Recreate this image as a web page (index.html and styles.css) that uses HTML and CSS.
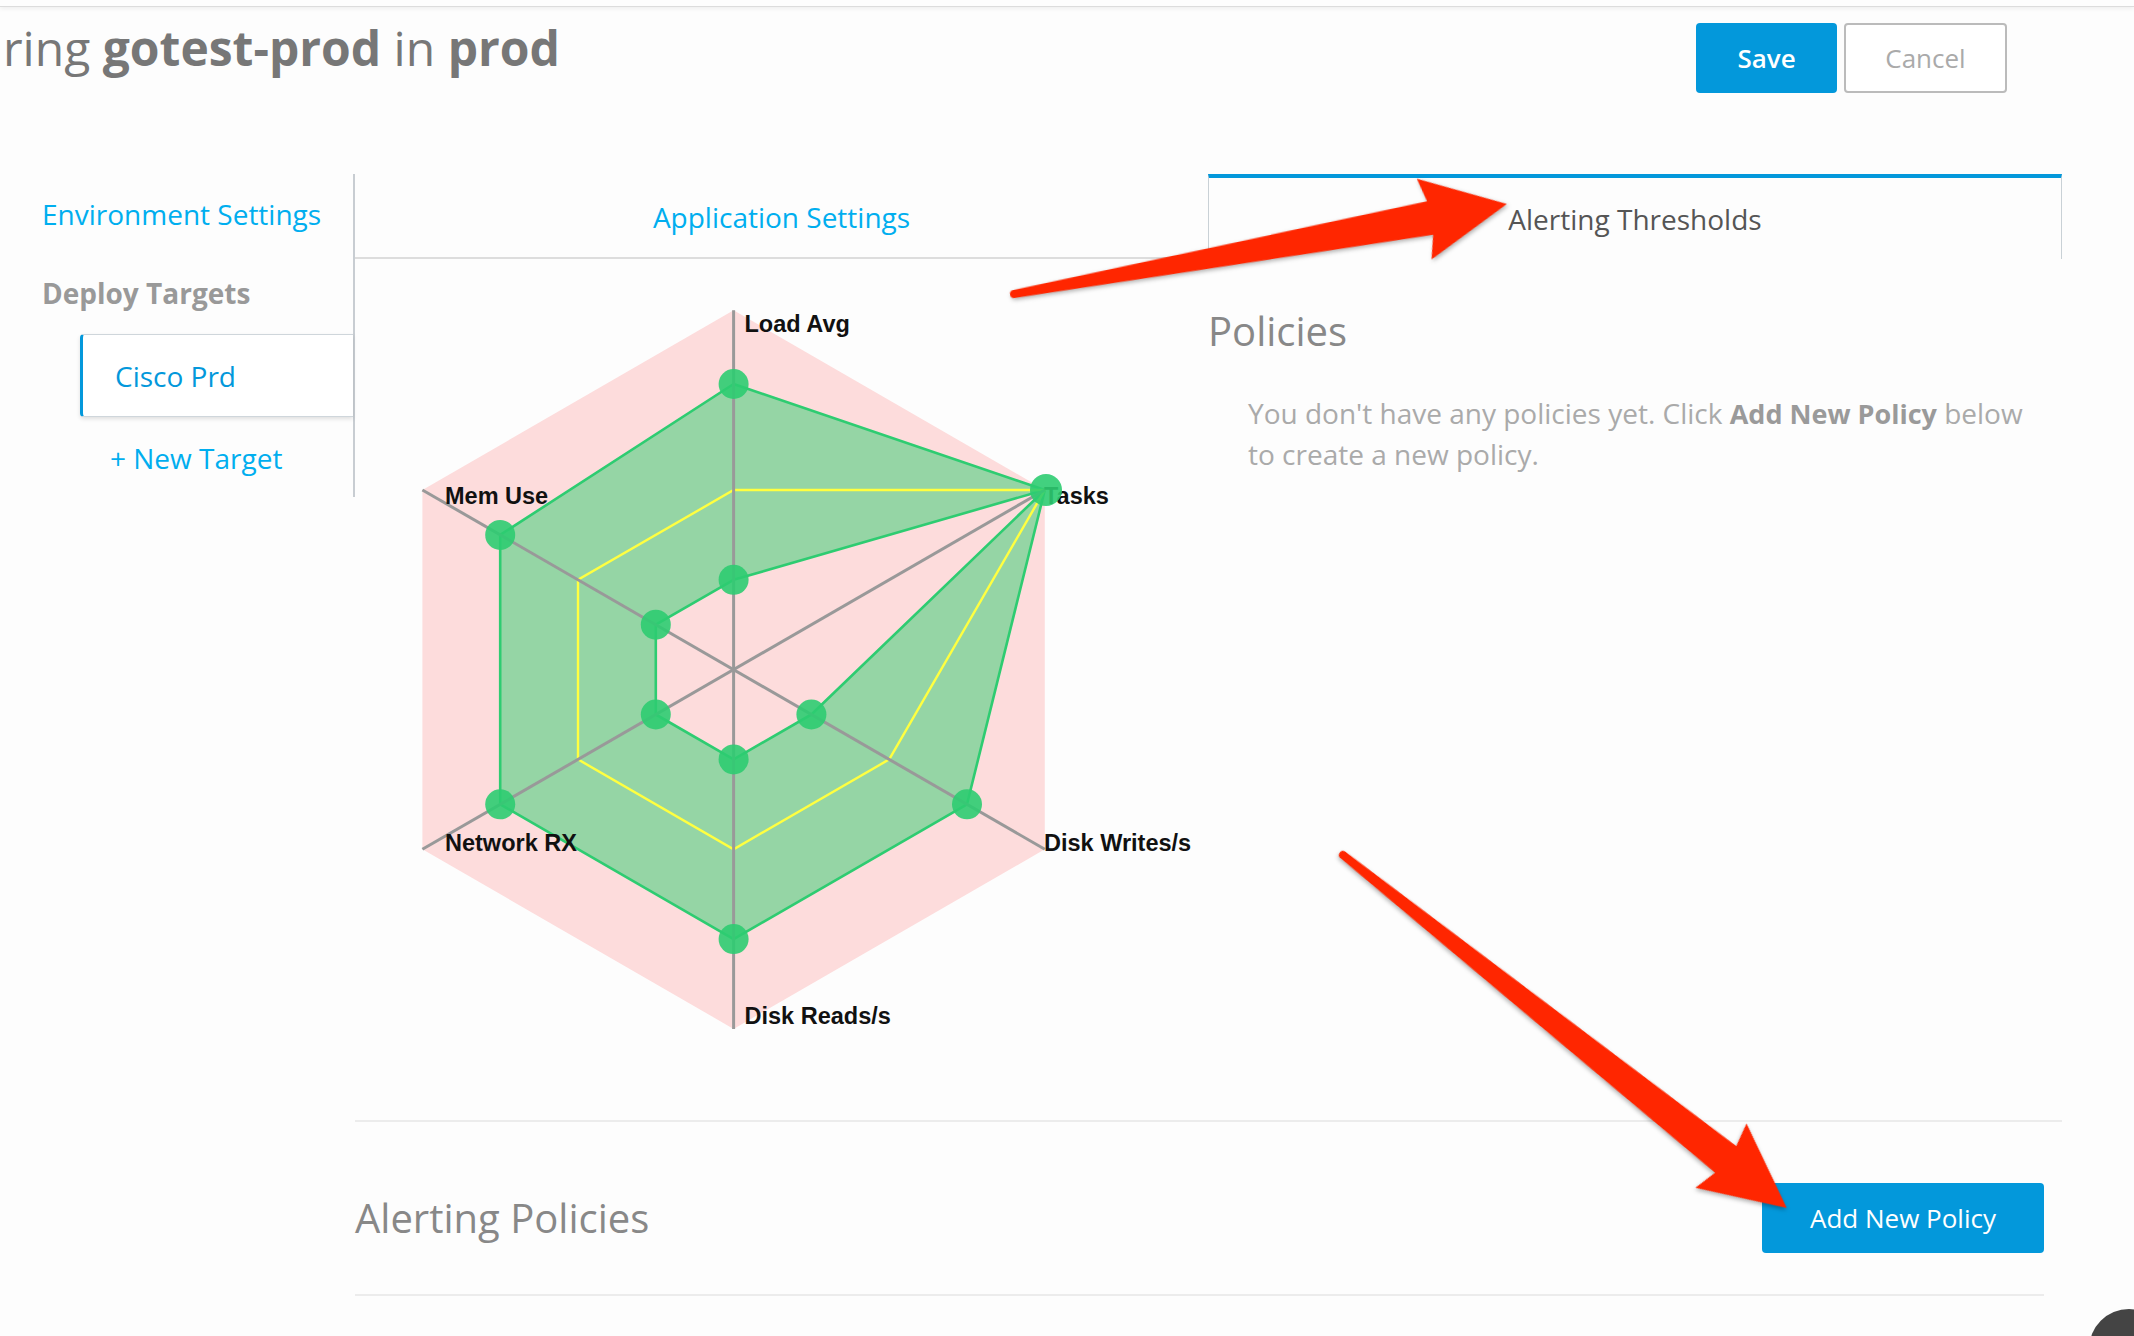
FILE: index.html
```html
<!DOCTYPE html>
<html lang="en">
<head>
<meta charset="utf-8">
<title>Alerting Thresholds</title>
<link rel="stylesheet" href="styles.css">
</head>
<body>
<div class="topbar"></div>
<header class="header">
  <h1 class="title">ring <b>gotest-prod</b> in <b>prod</b></h1>
  <div class="actions">
    <button class="btn btn-primary btn-save">Save</button>
    <button class="btn btn-default btn-cancel">Cancel</button>
  </div>
</header>
<main class="main">
  <nav class="sidebar">
    <a class="nav-link">Environment Settings</a>
    <div class="nav-heading">Deploy Targets</div>
    <a class="target">Cisco Prd</a>
    <a class="new-target">+ New Target</a>
  </nav>
  <section class="panel">
    <div class="tabs">
      <div class="tab">Application Settings</div>
      <div class="tab active">Alerting Thresholds</div>
    </div>
    <div class="tab-body">
      <div class="chart-col">
        <svg class="radar" viewBox="355 259 853 861" xmlns="http://www.w3.org/2000/svg">
          <polygon class="hex" points="733.6,310.3 1044.8,489.95 1044.8,849.25 733.6,1028.9 422.4,849.25 422.4,489.95"/>
          <path class="band" fill-rule="evenodd" d="M733.6,384 L1044.8,489.95 L967,804.3 L733.6,939.1 L500.2,804.3 L500.2,534.9 Z M733.6,579.8 L1044.8,489.95 L811.4,714.5 L733.6,759.4 L655.8,714.5 L655.8,624.7 Z"/>
          <polygon class="mid" points="733.6,490 1044.8,489.95 889.2,759.4 733.6,849.3 578,759.4 578,579.8"/>
          <g class="axes">
            <line x1="733.6" y1="310.3" x2="733.6" y2="1028.9"/>
            <line x1="422.4" y1="489.95" x2="1044.8" y2="849.25"/>
            <line x1="1044.8" y1="489.95" x2="422.4" y2="849.25"/>
          </g>
          <g class="labels">
            <text x="744.5" y="332">Load Avg</text>
            <text x="1044" y="504">Tasks</text>
            <text x="1044" y="851">Disk Writes/s</text>
            <text x="744.5" y="1024">Disk Reads/s</text>
            <text x="445" y="851">Network RX</text>
            <text x="445" y="504">Mem Use</text>
          </g>
          <g class="dots">
            <circle cx="733.6" cy="384" r="15"/>
            <circle cx="1046" cy="489.95" r="16"/>
            <circle cx="967" cy="804.3" r="15"/>
            <circle cx="733.6" cy="939.1" r="15"/>
            <circle cx="500.2" cy="804.3" r="15"/>
            <circle cx="500.2" cy="534.9" r="15"/>
            <circle cx="733.6" cy="579.8" r="15"/>
            <circle cx="811.4" cy="714.5" r="15"/>
            <circle cx="733.6" cy="759.4" r="15"/>
            <circle cx="655.8" cy="714.5" r="15"/>
            <circle cx="655.8" cy="624.7" r="15"/>
          </g>
        </svg>
      </div>
      <div class="policies-col">
        <h2 class="section-title">Policies</h2>
        <p class="empty-text">You don't have any policies yet. Click <b>Add New Policy</b> below to create a new policy.</p>
      </div>
    </div>
    <div class="alert-row">
      <h2 class="section-title">Alerting Policies</h2>
      <button class="btn btn-primary btn-add">Add New Policy</button>
    </div>
  </section>
</main>
<svg class="annotations" viewBox="0 0 2134 1336" xmlns="http://www.w3.org/2000/svg">
  <g transform="translate(1014 294) rotate(-10.35)">
    <path class="arrow" d="M0,-4 L423,-17 L417,-41 L501,0 L417,41 L423,17 L0,4 A4,4 0 0 1 0,-4 Z"/>
  </g>
  <g transform="translate(1343 855) rotate(38.5)">
    <path class="arrow" d="M0,-4 L489,-17 L483,-41 L567,0 L483,41 L489,17 L0,4 A4,4 0 0 1 0,-4 Z"/>
  </g>
</svg>
<div class="help-bubble"></div>
</body>
</html>
```

FILE: styles.css
```css
html, body {
  margin: 0;
  padding: 0;
  overflow: hidden;
}
body {
  width: 2134px;
  height: 1336px;
  background: #fdfdfd;
  font-family: "Open Sans", "Noto Sans", sans-serif;
  position: relative;
}
.topbar {
  height: 6px;
  border-bottom: 1px solid #dcdcdc;
  box-shadow: 0 2px 4px rgba(0, 0, 0, 0.06);
  background: #fdfdfd;
}
.header {
  display: flex;
  justify-content: space-between;
  align-items: flex-start;
  padding: 16px 127px 0 3px;
}
.title {
  margin: -4px 0 0 0;
  font-size: 48px;
  line-height: 58px;
  font-weight: 400;
  color: #777;
  white-space: nowrap;
}
.title b {
  font-weight: 700;
}
.actions {
  display: flex;
  gap: 7px;
}
.btn {
  font-family: "Open Sans", "Noto Sans", sans-serif;
  font-size: 26px;
  height: 70px;
  border-radius: 4px;
  cursor: pointer;
  padding: 0;
}
.btn-primary {
  background: #0398db;
  border: none;
  color: #fff;
}
.btn-default {
  background: #fff;
  border: 2px solid #bbb;
  color: #aaa;
}
.btn-save {
  width: 141px;
  font-weight: 600;
}
.btn-cancel {
  width: 163px;
}
.main {
  display: flex;
  align-items: flex-start;
  margin-top: 81px;
}
.sidebar {
  width: 355px;
  height: 323px;
  box-sizing: border-box;
  border-right: 2px solid #c8cdd2;
  padding-top: 20px;
  display: flex;
  flex-direction: column;
  font-size: 28px;
  line-height: 40px;
}
.nav-link {
  padding-left: 42px;
  color: #00aeef;
}
.nav-heading {
  margin-top: 39px;
  padding-left: 42px;
  color: #999;
  font-weight: 700;
}
.target {
  margin-top: 21px;
  margin-left: 80px;
  height: 83px;
  box-sizing: border-box;
  display: flex;
  align-items: center;
  padding-left: 32px;
  color: #0398db;
  border-left: 3px solid #0398db;
  border-top: 1px solid #cfd6db;
  border-bottom: 1px solid #cfd6db;
  border-radius: 4px 0 0 4px;
  box-shadow: 0 2px 4px rgba(0, 0, 0, 0.12);
  background: #fff;
}
.new-target {
  margin-top: 21px;
  padding-left: 110px;
  color: #00aeef;
}
.panel {
  width: 1707px;
}
.tabs {
  display: grid;
  grid-template-columns: 853px 854px;
  height: 85px;
}
.tab {
  display: flex;
  align-items: center;
  justify-content: center;
  font-size: 28px;
  color: #00aeef;
  box-sizing: border-box;
  padding-top: 3px;
  border-bottom: 2px solid #ddd;
}
.tab.active {
  color: #555;
  padding-top: 0;
  border-bottom: none;
  border-top: 4px solid #0398db;
  border-left: 1px solid #c9d1d6;
  border-right: 1px solid #c9d1d6;
}
.tab-body {
  display: flex;
  height: 863px;
  box-sizing: border-box;
  border-bottom: 2px solid #ececec;
}
.chart-col {
  width: 853px;
  flex: none;
}
.radar {
  display: block;
  width: 853px;
  height: 861px;
}
.hex {
  fill: #fddcdc;
}
.band {
  fill: #95d5a5;
  stroke: #2ecc71;
  stroke-width: 2.6;
  stroke-linejoin: round;
}
.mid {
  fill: none;
  stroke: #ffff40;
  stroke-width: 2.4;
}
.axes line {
  stroke: #999;
  stroke-width: 3;
}
.labels text {
  font-family: "Liberation Sans", Arial, sans-serif;
  font-weight: 700;
  font-size: 23.5px;
  fill: #111;
}
.dots circle {
  fill: #2ecc71;
  fill-opacity: 0.9;
}
.policies-col {
  flex: 1;
  padding-top: 48px;
}
.section-title {
  margin: 0;
  font-size: 40px;
  line-height: 48px;
  font-weight: 400;
  color: #888;
}
.empty-text {
  margin: 38px 0 0 0;
  padding-left: 40px;
  max-width: 790px;
  font-size: 28px;
  line-height: 41px;
  color: #aaa;
}
.empty-text b {
  color: #9a9a9a;
  font-size: 27px;
  font-weight: 700;
}
.alert-row {
  width: 1689px;
  height: 174px;
  box-sizing: border-box;
  padding-top: 20px;
  border-bottom: 2px solid #ececec;
  display: flex;
  align-items: center;
  justify-content: space-between;
}
.btn-add {
  width: 282px;
}
.annotations {
  position: absolute;
  left: 0;
  top: 0;
  width: 2134px;
  height: 1336px;
  pointer-events: none;
}
.arrow {
  fill: #ff2600;
  filter: drop-shadow(1px 2px 2px rgba(0, 0, 0, 0.3));
}
.help-bubble {
  position: fixed;
  left: 2089px;
  top: 1309px;
  width: 80px;
  height: 80px;
  border-radius: 50%;
  background: #444;
}
```
